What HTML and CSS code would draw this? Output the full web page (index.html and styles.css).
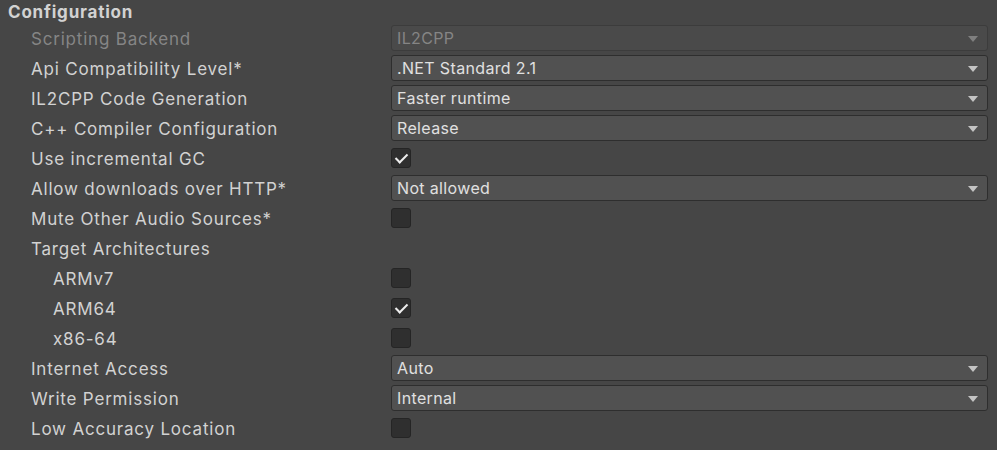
FILE: index.html
```html
<!DOCTYPE html>
<html lang="en">
<head>
    <meta charset="UTF-8">
    <title>Player Settings - Configuration</title>
    <link rel="stylesheet" href="styles.css">
</head>
<body>
<div class="panel">
    <div class="header">Configuration</div>

    <div class="row disabled">
        <div class="label">Scripting Backend</div>
        <div class="field"><div class="dropdown">IL2CPP</div></div>
    </div>
    <div class="row">
        <div class="label">Api Compatibility Level*</div>
        <div class="field"><div class="dropdown">.NET Standard 2.1</div></div>
    </div>
    <div class="row">
        <div class="label">IL2CPP Code Generation</div>
        <div class="field"><div class="dropdown">Faster runtime</div></div>
    </div>
    <div class="row">
        <div class="label">C++ Compiler Configuration</div>
        <div class="field"><div class="dropdown">Release</div></div>
    </div>
    <div class="row">
        <div class="label">Use incremental GC</div>
        <div class="field"><div class="checkbox checked"></div></div>
    </div>
    <div class="row">
        <div class="label">Allow downloads over HTTP*</div>
        <div class="field"><div class="dropdown">Not allowed</div></div>
    </div>
    <div class="row">
        <div class="label">Mute Other Audio Sources*</div>
        <div class="field"><div class="checkbox"></div></div>
    </div>
    <div class="row">
        <div class="label">Target Architectures</div>
        <div class="field"></div>
    </div>
    <div class="row">
        <div class="label sub">ARMv7</div>
        <div class="field"><div class="checkbox"></div></div>
    </div>
    <div class="row">
        <div class="label sub">ARM64</div>
        <div class="field"><div class="checkbox checked"></div></div>
    </div>
    <div class="row">
        <div class="label sub">x86-64</div>
        <div class="field"><div class="checkbox"></div></div>
    </div>
    <div class="row">
        <div class="label">Internet Access</div>
        <div class="field"><div class="dropdown">Auto</div></div>
    </div>
    <div class="row">
        <div class="label">Write Permission</div>
        <div class="field"><div class="dropdown">Internal</div></div>
    </div>
    <div class="row">
        <div class="label">Low Accuracy Location</div>
        <div class="field"><div class="checkbox"></div></div>
    </div>
</div>
</body>
</html>
```

FILE: styles.css
```css
body {
    margin: 0;
    background-color: #464646;
    font-family: Inter, "Noto Sans", sans-serif;
    font-size: 17px;
    color: #d2d2d2;
}

.panel {
    padding-right: 9px;
}

.header {
    height: 23px;
    line-height: 25px;
    padding-left: 8px;
    font-weight: bold;
    letter-spacing: 0.8px;
    color: #d2d2d2;
}

.row {
    display: flex;
    align-items: center;
    height: 30px;
}

.label {
    width: 360px;
    padding-left: 31px;
    padding-top: 2px;
    letter-spacing: 0.8px;
}

.label.sub {
    padding-left: 53px;
    width: 338px;
}

.field {
    flex: 1;
    display: flex;
    align-items: center;
}

.dropdown {
    flex: 1;
    position: relative;
    height: 24px;
    line-height: 25px;
    padding-left: 5px;
    background-color: #515151;
    border: 1px solid #2e2e2e;
    border-radius: 3px;
    font-size: 16px;
    letter-spacing: 0.35px;
    color: #e0e0e0;
}

.dropdown::after {
    content: "";
    position: absolute;
    right: 9px;
    top: 10px;
    border-left: 5px solid transparent;
    border-right: 5px solid transparent;
    border-top: 6px solid #c4c4c4;
}

.checkbox {
    width: 18px;
    height: 18px;
    background-color: #2f2f2f;
    border: 1px solid #252525;
    border-radius: 3px;
    position: relative;
}

.checkbox.checked::after {
    content: "";
    position: absolute;
    left: 6px;
    top: 2px;
    width: 5px;
    height: 10px;
    border-right: 2px solid #eeeeee;
    border-bottom: 2px solid #eeeeee;
    transform: rotate(45deg);
}

.disabled .label,
.disabled .dropdown {
    color: #858585;
}

.disabled .dropdown {
    background-color: #4a4a4a;
    border-color: #3c3c3c;
}

.disabled .dropdown::after {
    border-top-color: #7f7f7f;
}
```
